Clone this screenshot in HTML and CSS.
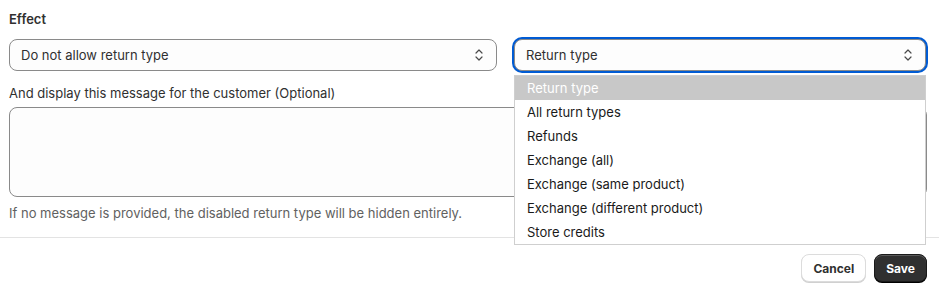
FILE: index.html
```html
<!DOCTYPE html>
<html lang="en">
<head>
    <meta charset="UTF-8">
    <title>Return rule</title>
    <link rel="stylesheet" href="styles.css">
</head>
<body>
    <div class="section">
        <p class="label label-bold">Effect</p>
        <div class="select-row">
            <div class="select">
                <span>Do not allow return type</span>
                <svg class="chevrons" width="10" height="14" viewBox="0 0 10 14">
                    <path d="M2 5 L5 2 L8 5 M2 9 L5 12 L8 9" fill="none" stroke="#4a4a4a" stroke-width="1.2" stroke-linecap="round" stroke-linejoin="round"/>
                </svg>
            </div>
            <div class="select-wrap">
                <div class="select select-focus">
                    <span>Return type</span>
                    <svg class="chevrons" width="10" height="14" viewBox="0 0 10 14">
                        <path d="M2 5 L5 2 L8 5 M2 9 L5 12 L8 9" fill="none" stroke="#4a4a4a" stroke-width="1.2" stroke-linecap="round" stroke-linejoin="round"/>
                    </svg>
                </div>
                <ul class="dropdown">
                    <li class="active">Return type</li>
                    <li>All return types</li>
                    <li>Refunds</li>
                    <li>Exchange (all)</li>
                    <li>Exchange (same product)</li>
                    <li>Exchange (different product)</li>
                    <li>Store credits</li>
                </ul>
            </div>
        </div>

        <p class="label label-msg">And display this message for the customer (Optional)</p>
        <div class="textarea"></div>
        <p class="help">If no message is provided, the disabled return type will be hidden entirely.</p>
    </div>

    <div class="footer">
        <button class="btn btn-cancel">Cancel</button>
        <button class="btn btn-save">Save</button>
    </div>
</body>
</html>
```

FILE: styles.css
```css
body {
    margin: 0;
    font-family: Inter, "Liberation Sans", sans-serif;
    font-size: 13px;
    color: #303030;
    background: #ffffff;
}

.section {
    padding: 9px 12px 14px 9px;
    border-bottom: 1px solid #e3e3e3;
}

.label {
    margin: 0;
    line-height: 20px;
    color: #303030;
}

.label-bold {
    font-weight: 600;
    margin-bottom: 10px;
}

.label-msg {
    margin-top: 12px;
    margin-bottom: 4px;
}

.select-row {
    display: grid;
    grid-template-columns: 488px 412px;
    gap: 17px;
}

.select-wrap {
    position: relative;
}

.select {
    height: 32px;
    box-sizing: border-box;
    border: 1px solid #8a8a8a;
    border-radius: 8px;
    background: #fdfdfd;
    display: flex;
    align-items: center;
    justify-content: space-between;
    padding: 0 12px 0 11px;
    color: #303030;
}

.select-focus {
    box-shadow: 0 0 0 2px #005bd3;
}

.chevrons {
    display: block;
}

.dropdown {
    position: absolute;
    top: 36px;
    left: 0;
    right: 0;
    margin: 0;
    padding: 0;
    list-style: none;
    background: #ffffff;
    border: 1px solid #cfcfcf;
    z-index: 2;
}

.dropdown li {
    height: 24px;
    line-height: 24px;
    padding-left: 12px;
    color: #1a1a1a;
}

.dropdown li.active {
    background: #c8c8c8;
    color: #ffffff;
}

.textarea {
    height: 90px;
    box-sizing: border-box;
    border: 1px solid #8a8a8a;
    border-radius: 8px;
    background: #fdfdfd;
}

.help {
    margin: 6px 0 0;
    line-height: 20px;
    color: #616161;
}

.footer {
    display: flex;
    justify-content: flex-end;
    gap: 8px;
    padding: 16px 12px 10px;
}

.btn {
    height: 28px;
    padding: 0 11px;
    border-radius: 8px;
    font-family: Inter, "Liberation Sans", sans-serif;
    font-size: 12px;
    font-weight: 650;
    cursor: pointer;
}

.btn-cancel {
    background: #ffffff;
    color: #303030;
    border: 1px solid #dcdcdc;
    box-shadow: 0 1px 0 #d0d0d0;
}

.btn-save {
    background: #303030;
    color: #ffffff;
    border: 1px solid #1a1a1a;
    box-shadow: inset 0 1px 0 #5a5a5a, 0 1px 0 #000000;
}
```
